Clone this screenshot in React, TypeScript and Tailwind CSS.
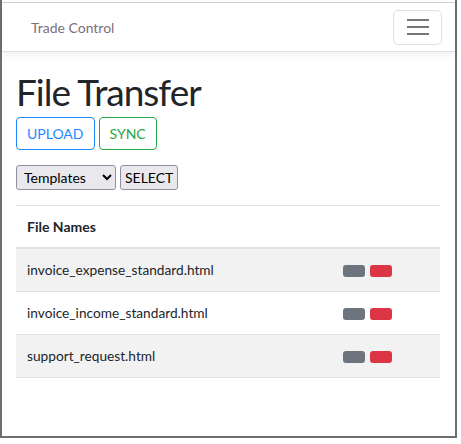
const files = [
  "invoice_expense_standard.html",
  "invoice_income_standard.html",
  "support_request.html",
]

function FileRow(props: any) {
  const { name, index } = props
  const striped = index % 2 === 0
  return (
    <div className={`flex items-center h-[43px] border-b border-[#dee2e6] ${striped ? "bg-[#f2f2f2]" : "bg-white"}`}>
      <div className="w-[327px] pl-[11px] text-[13.7px] text-[#212529]">{name}</div>
      <div className="flex gap-[5px] pt-[1px]">
        <span className="w-[22px] h-[12px] rounded-[3px] bg-[#6c757d]" />
        <span className="w-[22px] h-[12px] rounded-[3px] bg-[#dc3545]" />
      </div>
    </div>
  )
}

export default function App() {
  return (
    <div className="w-[461px] h-[444px] bg-white font-['Lato','Noto_Sans',sans-serif]">
      <div className="w-[457px] h-[438px] pt-[2px] border-l-2 border-r-2 border-b-2 border-[#6e6e6e]">
        <div className="h-[436px] border-t border-[#cfcfcf] flex flex-col">
          <nav className="h-[49px] flex items-center justify-between pl-[29px] pr-[13px] border-b border-[#dee2e6] shadow-[0_3px_6px_rgba(0,0,0,0.06)]">
            <span className="text-[14px] text-[#7a6f7d]">Trade Control</span>
            <button className="w-[49px] h-[35px] rounded-[5px] border border-[#e0e0e0] flex flex-col items-center justify-center gap-[5px]">
              <span className="w-[22px] h-[2px] bg-[#777]" />
              <span className="w-[22px] h-[2px] bg-[#777]" />
              <span className="w-[22px] h-[2px] bg-[#777]" />
            </button>
          </nav>
          <div className="px-[14px] pt-[17px]">
            <h1 className="text-[37px] leading-[46px] tracking-[-1px] text-[#212529]">File Transfer</h1>
            <div className="flex gap-[4px] mt-[2px]">
              <button className="h-[33px] px-[10px] rounded-[4px] border border-[#1e88ff] text-[#1e88ff] text-[14px]">UPLOAD</button>
              <button className="h-[33px] px-[10px] rounded-[4px] border border-[#28a745] text-[#28a745] text-[14px]">SYNC</button>
            </div>
            <div className="flex gap-[4px] mt-[15px]">
              <select className="w-[100px] h-[25px] rounded-[3px] border border-[#8f8f9d] bg-[#e9e9ed] text-[14px] text-black pl-[3px]">
                <option>Templates</option>
              </select>
              <button className="h-[25px] px-[4px] rounded-[3px] border border-[#8f8f9d] bg-[#e9e9ed] text-[14px] text-black">SELECT</button>
            </div>
            <div className="mt-[15px] w-[424px] border-t border-[#dee2e6]">
              <div className="h-[43px] flex items-center pl-[11px] border-b-2 border-[#dee2e6] text-[14px] font-bold text-[#212529]">File Names</div>
              {files.map((f, i) => (
                <FileRow key={f} name={f} index={i} />
              ))}
            </div>
          </div>
        </div>
      </div>
    </div>
  )
}
